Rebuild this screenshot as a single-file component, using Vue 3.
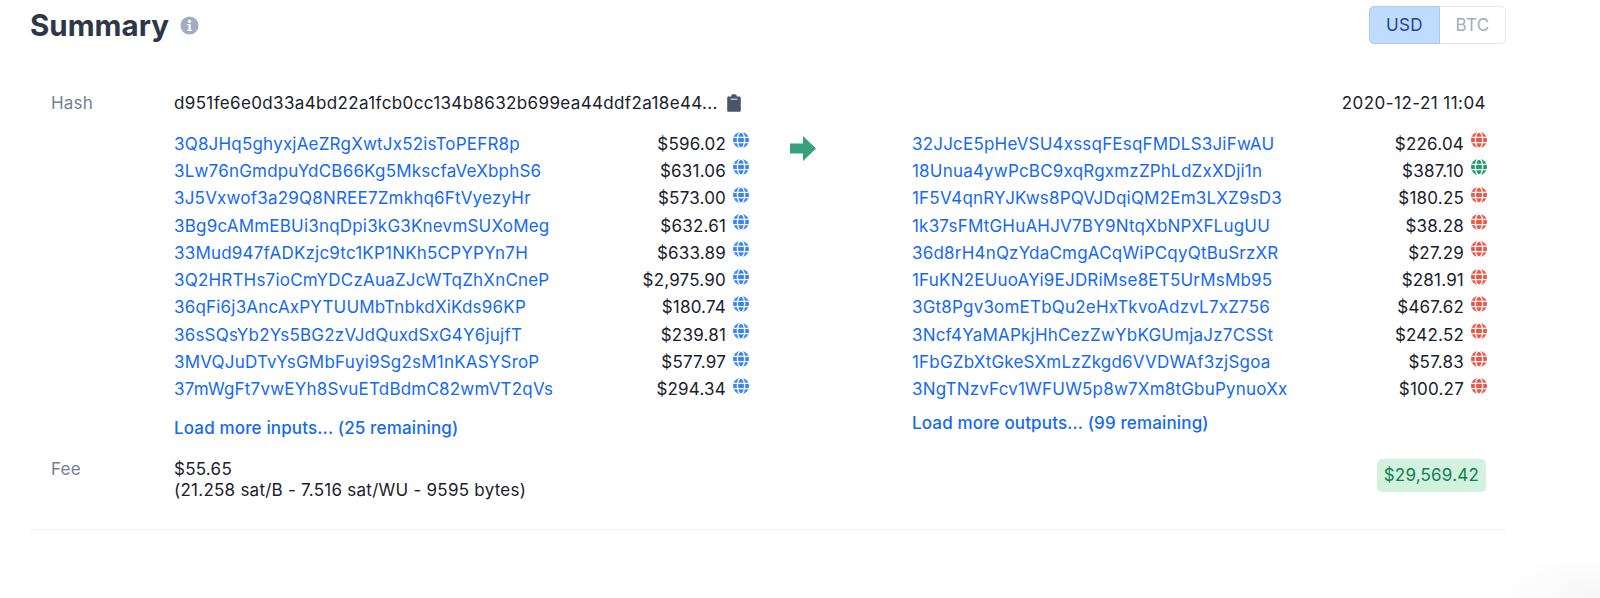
<script setup>
const inputs = [
  ['3Q8JHq5ghyxjAeZRgXwtJx52isToPEFR8p', '$596.02'],
  ['3Lw76nGmdpuYdCB66Kg5MkscfaVeXbphS6', '$631.06'],
  ['3J5Vxwof3a29Q8NREE7Zmkhq6FtVyezyHr', '$573.00'],
  ['3Bg9cAMmEBUi3nqDpi3kG3KnevmSUXoMeg', '$632.61'],
  ['33Mud947fADKzjc9tc1KP1NKh5CPYPYn7H', '$633.89'],
  ['3Q2HRTHs7ioCmYDCzAuaZJcWTqZhXnCneP', '$2,975.90'],
  ['36qFi6j3AncAxPYTUUMbTnbkdXiKds96KP', '$180.74'],
  ['36sSQsYb2Ys5BG2zVJdQuxdSxG4Y6jujfT', '$239.81'],
  ['3MVQJuDTvYsGMbFuyi9Sg2sM1nKASYSroP', '$577.97'],
  ['37mWgFt7vwEYh8SvuETdBdmC82wmVT2qVs', '$294.34'],
].map(([a, v]) => ({ a, v, c: 'blue' }))
const outputs = [
  ['32JJcE5pHeVSU4xssqFEsqFMDLS3JiFwAU', '$226.04', 'red'],
  ['18Unua4ywPcBC9xqRgxmzZPhLdZxXDji1n', '$387.10', 'green'],
  ['1F5V4qnRYJKws8PQVJDqiQM2Em3LXZ9sD3', '$180.25', 'red'],
  ['1k37sFMtGHuAHJV7BY9NtqXbNPXFLugUU', '$38.28', 'red'],
  ['36d8rH4nQzYdaCmgACqWiPCqyQtBuSrzXR', '$27.29', 'red'],
  ['1FuKN2EUuoAYi9EJDRiMse8ET5UrMsMb95', '$281.91', 'red'],
  ['3Gt8Pgv3omETbQu2eHxTkvoAdzvL7xZ756', '$467.62', 'red'],
  ['3Ncf4YaMAPkjHhCezZwYbKGUmjaJz7CSSt', '$242.52', 'red'],
  ['1FbGZbXtGkeSXmLzZkgd6VVDWAf3zjSgoa', '$57.83', 'red'],
  ['3NgTNzvFcv1WFUW5p8w7Xm8tGbuPynuoXx', '$100.27', 'red'],
].map(([a, v, c]) => ({ a, v, c }))
const globe = 'M8 0a8 8 0 1 0 0 16A8 8 0 0 0 8 0z'
</script>

<template>
  <div class="page">
    <header class="head">
      <h2 class="title">Summary</h2>
      <svg class="info" viewBox="0 0 20 20"><circle cx="10" cy="10" r="9.5" fill="#a0aec0" /><circle cx="10" cy="5.6" r="1.7" fill="#fff" /><path d="M7.6 8.4h3.6v6h1.3v1.4H7.6v-1.4h1.4V9.8H7.6z" fill="#fff" /></svg>
      <div class="toggle">
        <span class="tg on">USD</span>
        <span class="tg off">BTC</span>
      </div>
    </header>

    <div class="body">
      <div class="row hash">
        <span class="label">Hash</span>
        <span class="hashval">d951fe6e0d33a4bd22a1fcb0cc134b8632b699ea44ddf2a18e44...</span>
        <svg class="clip" viewBox="0 0 14 18"><path d="M1.6 2.6H4.2V2a1.8 1.8 0 0 1 1.8-1.8h2A1.8 1.8 0 0 1 9.8 2v.6h2.6c.8 0 1.4.6 1.4 1.4v12.4c0 .8-.6 1.4-1.4 1.4H1.6c-.8 0-1.4-.6-1.4-1.4V4c0-.8.6-1.4 1.4-1.4z" fill="#4a5568" /><rect x="3.6" y="4.6" width="6.8" height="1.3" fill="#cbd5e0" /></svg>
        <span class="date">2020-12-21 11:04</span>
      </div>

      <div class="flow">
        <div class="col">
          <div v-for="r in inputs" :key="r.a" class="line">
            <a class="addr">{{ r.a }}</a>
            <span class="amt">{{ r.v }}</span>
            <svg class="globe" :class="r.c" viewBox="0 0 16 16">
              <path :d="globe" fill="currentColor" />
              <g stroke="#fff" stroke-width="1.3" fill="none">
                <ellipse cx="8" cy="8" rx="3.6" ry="8" />
                <path d="M0.4 5.3h15.2M0.4 10.7h15.2" />
              </g>
            </svg>
          </div>
          <a class="more m-in">Load more inputs... (25 remaining)</a>
        </div>

        <div class="arrowbox">
          <svg class="arrow" viewBox="0 0 26 25"><path d="M0 7.5h13V0l13 12.5L13 25v-7.5H0z" fill="#38a07c" /></svg>
        </div>

        <div class="col">
          <div v-for="r in outputs" :key="r.a" class="line">
            <a class="addr">{{ r.a }}</a>
            <span class="amt">{{ r.v }}</span>
            <svg class="globe" :class="r.c" viewBox="0 0 16 16">
              <path :d="globe" fill="currentColor" />
              <g stroke="#fff" stroke-width="1.3" fill="none">
                <ellipse cx="8" cy="8" rx="3.6" ry="8" />
                <path d="M0.4 5.3h15.2M0.4 10.7h15.2" />
              </g>
            </svg>
          </div>
          <a class="more m-out">Load more outputs... (99 remaining)</a>
        </div>
      </div>

      <div class="row fee">
        <span class="label">Fee</span>
        <div class="feeval">$55.65<br />(21.258 sat/B - 7.516 sat/WU - 9595 bytes)</div>
        <span class="total">$29,569.42</span>
      </div>
    </div>
    <div class="rule"></div>
    <div class="blob"></div>
  </div>
</template>

<style>
html, body { margin: 0; background: #fff; }
</style>

<style scoped>
.page {
  width: 1476px;
  margin-left: 30px;
  font-family: Inter, "Liberation Sans", sans-serif;
  font-size: 17px;
  letter-spacing: 0.2px;
  color: #1a202c;
}
.head {
  display: flex;
  align-items: center;
  height: 50px;
}
.title {
  margin: 0;
  font-size: 29.5px;
  letter-spacing: 0;
  line-height: 50px;
  font-weight: 700;
  color: #2d3748;
}
.info { width: 19px; height: 19px; margin-left: 11px; }
.toggle {
  margin-left: auto;
  display: flex;
  width: 137px;
  height: 38px;
  box-sizing: border-box;
  border-radius: 5px;
  border: 1px solid #e2e8f0;
  font-size: 17px;
  letter-spacing: 0.4px;
}
.tg { display: flex; align-items: center; justify-content: center; }
.on {
  width: 69px;
  margin: -1px 0 -1px -1px;
  background: #bfdbfe;
  border: 1px solid #a7cbf7;
  border-radius: 5px 0 0 5px;
  color: #1e429f;
}
.off { flex: 1; color: #a0aec0; }
.body { padding: 0 20px 0 21px; margin-top: 39px; }
.row { display: flex; }
.label { width: 123px; color: #718096; flex: none; }
.hash { align-items: center; height: 27px; }
.hashval { white-space: nowrap; letter-spacing: 0.36px; }
.clip { width: 14px; height: 18px; margin-left: 9px; }
.date { margin-left: auto; letter-spacing: 0.45px; }
.flow { display: flex; margin: 14px 0 0 123px; }
.col { width: 575px; flex: none; }
.line {
  display: flex;
  align-items: center;
  height: 27.3px;
}
.addr { color: #1569f6; white-space: nowrap; }
.amt { margin-left: auto; }
.globe { width: 16px; height: 16px; margin: -7px 0 0 7px; flex: none; }
.blue { color: #3b86f7; }
.red { color: #f05545; }
.green { color: #1f9d6c; }
.arrowbox { width: 163px; flex: none; padding-top: 6px; padding-left: 41px; box-sizing: border-box; }
.arrow { display: block; width: 26px; height: 25px; }
.more { display: block; color: #1569f6; font-weight: 500; letter-spacing: 0.15px; }
.m-in { margin-top: 15px; }
.m-out { margin-top: 10px; }
.fee { margin-top: 21px; line-height: 21.5px; }
.feeval { flex: 1; letter-spacing: 0.25px; }
.total {
  align-self: flex-start;
  padding: 0 7px;
  height: 33px;
  line-height: 33px;
  border-radius: 5px;
  background: #d2f1de;
  color: #0e8050;
}
.rule { margin-top: 27px; height: 1px; background: #edf2f7; }
.blob {
  position: fixed;
  right: 0;
  bottom: 0;
  width: 110px;
  height: 45px;
  background: radial-gradient(ellipse at 100% 100%, #f6f6f6, #ffffff 70%);
}
</style>
